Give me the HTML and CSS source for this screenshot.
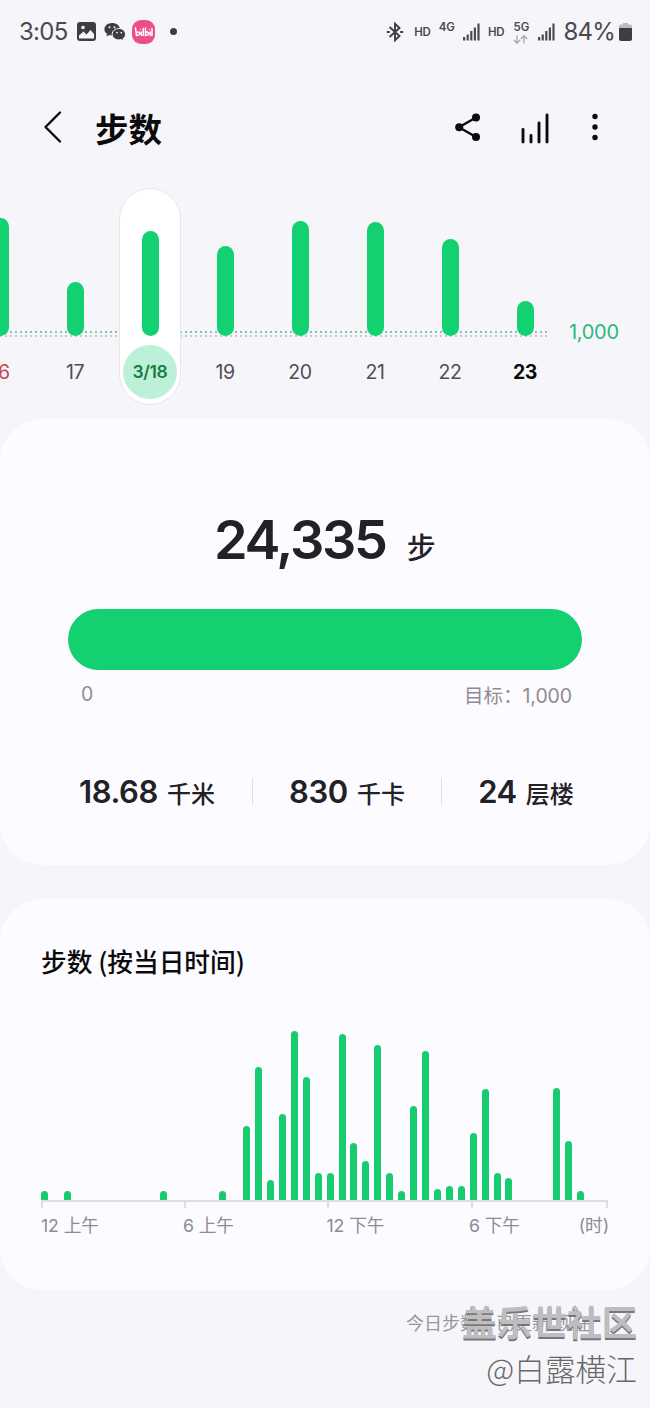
FILE: index.html
```html
<!DOCTYPE html>
<html lang="zh-CN">
<head>
<meta charset="utf-8">
<title>步数</title>
<link rel="stylesheet" href="styles.css">
</head>
<body>
<header class="status">
  <div class="status-left">
    <span class="clock">3:05</span>
    <svg class="ic-photo" width="19" height="19" viewBox="0 0 19 19"><rect width="19" height="19" rx="3" fill="#3e3e42"/><path d="M2 13.5 L6.5 9.5 L9.5 12.5 L13.5 8 L17 12 V16.500 H2Z" fill="#f6f6fa"/><circle cx="6" cy="5.500" r="1.800" fill="#f6f6fa"/></svg>
    <svg class="ic-chat" width="22" height="20" viewBox="0 0 22 20"><path d="M8 1C3.600 1 .4 3.800.4 7.200c0 2 1 3.600 2.700 4.800l-.7 2.500 3-1.500 2.600.4C12.400 13.400 16 10.700 16 7.200S12.400 1 8 1Z" fill="#3e3e42"/><path d="M15 6.500c-3.900 0-6.800 2.500-6.800 5.700s2.900 5.700 6.800 5.700l2-.3 2.500 1.400-.6-2.200c1.600-1.100 2.600-2.700 2.600-4.600 0-3.200-2.900-5.700-6.500-5.700Z" fill="#3e3e42" stroke="#f6f6fa"/><g fill="#f6f6fa"><circle cx="5.500" cy="5.300" r="1"/><circle cx="10.500" cy="5.300" r="1"/><circle cx="13" cy="10.600" r=".9"/><circle cx="17.300" cy="10.600" r=".9"/></g></svg>
    <svg class="ic-tv" width="23" height="24" viewBox="0 0 23 24"><rect width="23" height="24" rx="9" fill="#ee4e88"/><g fill="none" stroke="#fff" stroke-width="1.500" stroke-linecap="round"><path d="M3.500 8 4.500 15.500Q8.500 15 7.500 12.500 6.500 11.500 4.500 12.500M9.300 12V15.500M11.300 8.500V15.500M13.500 8V15.500Q17.500 15 16.500 12.500 15.500 11.500 13.500 12.500M18.300 12V15.500M20 8.500V15.500"/><path d="M8.500 9.500h.2M17.500 9.500h.2" stroke-width="1.200"/></g></svg>
    <i class="dot"></i>
  </div>
  <div class="status-right">
    <svg width="18" height="20" viewBox="0 0 18 20" fill="none" stroke="#3e3e42" stroke-width="1.900"><path d="M3.500 5 L13.500 14 L9 18.300 V1.700 L13.500 6 L3.500 15"/><path d="M.8 10h3M14.200 10h3" stroke-width="2.200"/></svg>
    <span class="hd">HD</span>
    <span class="net">4G</span>
    <svg class="sig" width="17" height="18" viewBox="0 0 17 18" fill="#4c4c50"><path d="M0 14h2.200v3.500H0zM3.600 11.500h2.200v6H3.600zM7.200 8h2.200v9.500H7.200zM10.800 4.500H13v13h-2.200zM14.400 .5h2.200v17h-2.200z"/></svg>
    <span class="hd hd2">HD</span>
    <span class="net net5">5G<svg width="15" height="9" viewBox="0 0 15 9" fill="none" stroke="#aaaab0" stroke-width="1.400"><path d="M4 .5V8M.8 5 4 8.200 7.200 5M11 8.500V1M7.800 4 11 .8 14.200 4"/></svg></span>
    <svg class="sig sig2" width="17" height="18" viewBox="0 0 17 18" fill="#4c4c50"><path d="M0 14h2.200v3.500H0zM3.600 11.500h2.200v6H3.600zM7.200 8h2.200v9.500H7.200zM10.800 4.500H13v13h-2.200zM14.400 .5h2.200v17h-2.200z"/></svg>
    <span class="pct">84%</span>
    <svg class="batt" width="13" height="18" viewBox="0 0 13 18"><path d="M4 0h5v1.500h2.500Q13 1.500 13 3v3H0V3Q0 1.500 1.500 1.500H4Z" fill="#bcbcc0"/><path d="M0 5h13v11q0 2-2 2H2q-2 0-2-2Z" fill="#3e3e42"/></svg>
  </div>
</header>

<nav class="bar">
  <svg width="20" height="34" viewBox="0 0 20 34" fill="none" stroke="#0b0b0d" stroke-width="2.300" stroke-linecap="round" stroke-linejoin="round"><path d="M17 2.500 2.500 17 17 31.500"/></svg>
  <h1>步数</h1>
  <svg class="share" width="28" height="30" viewBox="0 0 28 30"><path d="M22 5.500 5 15.200 22 25" fill="none" stroke="#0b0b0d" stroke-width="2.400"/><g fill="#0b0b0d"><circle cx="22" cy="5.500" r="4"/><circle cx="5.200" cy="15.200" r="4"/><circle cx="22" cy="25" r="4"/></g></svg>
  <svg class="stats" width="30" height="32" viewBox="0 0 30 32" stroke="#0b0b0d" stroke-width="2.900" stroke-linecap="round"><path d="M3 17.500V30M11 23.500V30M19 11V30M27 3V30"/></svg>
  <svg class="more" width="8" height="28" viewBox="0 0 8 28" fill="#0b0b0d"><circle cx="4" cy="3.500" r="2.700"/><circle cx="4" cy="14" r="2.700"/><circle cx="4" cy="24.500" r="2.700"/></svg>
</nav>

<section class="week">
  <div class="goal-line"></div>
  <div class="days">
    <div class="day sunday"><i style="height:118px"></i><span>16</span></div>
    <div class="day"><i style="height:54px"></i><span>17</span></div>
    <div class="day selected"><i style="height:105px"></i><span>3/18</span></div>
    <div class="day"><i style="height:90px"></i><span>19</span></div>
    <div class="day"><i style="height:115px"></i><span>20</span></div>
    <div class="day"><i style="height:114px"></i><span>21</span></div>
    <div class="day"><i style="height:97px"></i><span>22</span></div>
    <div class="day today"><i style="height:35px"></i><span>23</span></div>
  </div>
  <span class="goal-label">1,000</span>
</section>

<section class="card summary">
  <div class="total"><b>24,335</b><span>步</span></div>
  <div class="progress"></div>
  <div class="range"><span>0</span><span class="target">目标：<em>1,000</em></span></div>
  <div class="metrics">
    <div><b>18.68</b><span>千米</span></div>
    <div><b>830</b><span>千卡</span></div>
    <div><b>24</b><span>层楼</span></div>
  </div>
</section>

<section class="card hourly">
  <h2>步数 (按当日时间)</h2>
  <div class="bars">
    <i style="height:9px"></i><i></i><i style="height:9px"></i><i></i><i></i><i></i><i></i><i></i><i></i><i></i><i style="height:9px"></i><i></i><i></i><i></i><i></i><i style="height:9px"></i><i></i><i style="height:74px"></i><i style="height:133px"></i><i style="height:20px"></i><i style="height:86px"></i><i style="height:169px"></i><i style="height:123px"></i><i style="height:27px"></i><i style="height:27px"></i><i style="height:166px"></i><i style="height:57px"></i><i style="height:39px"></i><i style="height:155px"></i><i style="height:27px"></i><i style="height:9px"></i><i style="height:94px"></i><i style="height:149px"></i><i style="height:11px"></i><i style="height:14px"></i><i style="height:14px"></i><i style="height:67px"></i><i style="height:111px"></i><i style="height:27px"></i><i style="height:22px"></i><i></i><i></i><i></i><i style="height:112px"></i><i style="height:59px"></i><i style="height:9px"></i>
  </div>
  <div class="axis"><i></i><i></i><i></i><i></i></div>
  <div class="hours"><span>12 上午</span><span>6 上午</span><span>12 下午</span><span>6 下午</span><span class="unit">(时)</span></div>
</section>

<footer class="foot">
  <p class="note">今日步数：已更新 现在</p>
  <div class="mark"><span class="community">盖乐世社区</span><span class="author">@白露横江</span></div>
</footer>
</body>
</html>
```
FILE: styles.css
```css
* { box-sizing: border-box; }
body {
  margin: 0;
  width: 650px;
  height: 1408px;
  overflow: hidden;
  background: #f6f6fa;
  color: #222126;
  font-family: Inter, "Noto Sans CJK SC", sans-serif;
}
svg { display: block; flex: none; }
i, em { font-style: normal; }
h1, h2, p { margin: 0; }
span, b { white-space: nowrap; }

.status { display: flex; justify-content: space-between; height: 64px; padding: 0 19px; color: #4a4a4e; }
.status-left, .status-right { display: flex; align-items: center; height: 63px; }
.clock { width: 58px; font: 400 24px/30px Inter, sans-serif; letter-spacing: -.7px; }
.ic-chat { margin-left: 8px; }
.ic-tv { margin-left: 6px; }
.dot { width: 7px; height: 7px; margin-left: 15px; border-radius: 50%; background: #3e3e42; }
.hd { margin-left: 10px; font: 600 11.500px/14px Inter, sans-serif; letter-spacing: -.2px; }
.net { align-self: flex-start; margin: 20px 0 0 8px; font: 600 11.500px/15px Inter, sans-serif; }
.sig { margin-left: 8px; }
.hd2 { margin-left: 8px; }
.net5 { width: 16px; margin-left: 9px; }
.sig2 { margin-left: 9px; }
.pct { margin-left: 8px; font: 400 24px/30px Inter, sans-serif; letter-spacing: -.8px; }
.batt { margin-left: 4px; margin-right: -1px; }

.bar { display: flex; align-items: center; height: 124px; padding: 3px 51px 0 43px; }
.bar h1 { margin-left: 32px; color: #0b0b0d; font: 700 33.500px/48px "Noto Sans CJK SC", sans-serif; }
.share { margin-left: auto; }
.stats { margin-left: 38px; }
.more { margin-left: 41px; }
.bar svg { margin-top: -2px; }
.bar .stats { margin-top: 0; }

.week { position: relative; height: 231px; }
.goal-line { position: absolute; top: 142.500px; left: 0; width: 550px; height: 7px; background:
  repeating-linear-gradient(90deg, #7acaaa 0 2px, transparent 2px 5px) 0 0 / 100% 2px no-repeat,
  repeating-linear-gradient(90deg, #c8c8ca 0 2px, transparent 2px 5px) 0 4px / 100% 2px no-repeat; }
.days { position: relative; display: flex; margin-left: -37.500px; }
.day { display: flex; flex-direction: column; align-items: center; justify-content: flex-end; width: 62px; height: 217px; margin: 0 6.500px; padding-bottom: 6px; }
.day i { width: 17px; border-radius: 9px; background: #13d170; }
.day span { width: 54px; height: 54px; margin-top: 9px; text-align: center; color: #4f4d57; font-size: 19.500px; line-height: 54px; letter-spacing: -.4px; }
.sunday span { color: #c94545; }
.selected { border: 1px solid #e7e7e9; padding-bottom: 5px; border-radius: 31px; background: #fff; }
.selected span { border-radius: 50%; background: #bdf0d8; color: #167e3e; font-size: 17.500px; font-weight: 600; }
.today span { color: #08080a; font-weight: 700; }
.goal-label { position: absolute; top: 132px; left: 569px; color: #2bb97a; font-size: 20px; line-height: 24px; letter-spacing: -.3px; }

.card { border-radius: 42px; background: #fcfbff; }
.summary { height: 446px; padding-top: 84px; }
.total { display: flex; align-items: baseline; margin-left: 214px; height: 106px; line-height: 74px; }
.total b { font-size: 54px; font-weight: 600; letter-spacing: -2.300px; }
.total span { margin-left: 21px; font: 500 29px/60px "Noto Sans CJK SC", sans-serif; }
.progress { width: 514px; height: 61px; margin-left: 68px; border-radius: 31px; background: #13d170; }
.range { display: flex; justify-content: space-between; padding: 10px 78px 0 81px; color: #8d8c92; font-size: 19.500px; line-height: 28px; }
.target { padding-top: 2px; }
.target em { letter-spacing: -.1px; }
.metrics { display: flex; margin: 68px 60px 0 58px; }
.metrics div { display: flex; align-items: center; justify-content: center; height: 27px; width: 189px; }
.metrics div:first-child { width: 194px; padding-right: 16px; }
.metrics div:last-child { width: 149px; flex: 1; padding-left: 20px; }
.metrics div + div { border-left: 1px solid #dfdee3; }
.metrics b { font-size: 31px; font-weight: 600; line-height: 36px; letter-spacing: -.4px; }
.metrics span { margin-left: 9px; font: 500 24px/36px "Noto Sans CJK SC", sans-serif; padding-top: 3px; }

.hourly { height: 391px; margin-top: 34px; padding: 42px 41px 0; }
.hourly h2 { height: 90px; color: #0b0b0d; font: 500 25.700px/39px "Noto Sans CJK SC", sans-serif; }
.bars { display: flex; align-items: flex-end; gap: 4.930px; height: 169px; margin-left: -.5px; }
.bars i { flex: none; width: 7px; border-radius: 3.500px 3.500px 0 0; background: #17cc6f; }
.axis { display: grid; grid-template-columns: 143px 143px 143.500px 137px; width: 567px; height: 8px; border-top: 2px solid #dededf; border-right: 2px solid #dededf; }
.axis i { border-left: 2px solid #dededf; }
.hours { display: grid; grid-template-columns: 142px 143.500px 142.500px auto 1fr; height: 28px; margin-top: 4px; color: #8d8c92; font-size: 17.700px; line-height: 28px; letter-spacing: -.1px; }
.hours .unit { justify-self: end; }

.foot { position: relative; height: 118px; }
.note { padding: 20px 0 0 406px; color: #98979e; font-size: 18px; line-height: 28px; }
.mark { position: absolute; top: 6px; right: 13px; display: flex; flex-direction: column; align-items: flex-end; font-family: "Noto Sans CJK SC", sans-serif; }
.community { color: #bebec0; font-size: 35px; font-weight: 700; line-height: 50px; text-shadow: 0 1.500px 0 #77777a; }
.author { color: #68686b; font-size: 30.700px; font-weight: 300; line-height: 44px; }
```
